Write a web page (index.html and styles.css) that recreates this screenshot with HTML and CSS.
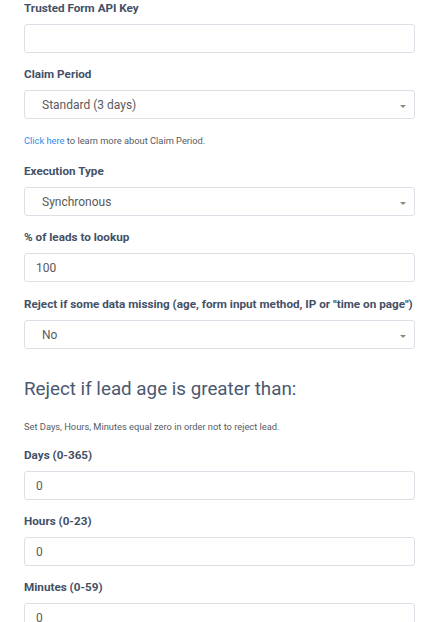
FILE: index.html
```html
<!DOCTYPE html>
<html>
<head>
<meta charset="utf-8">
<link rel="stylesheet" href="styles.css">
</head>
<body>
<div class="form">
  <div class="group">
    <label class="label">Trusted Form API Key</label>
    <div class="input"></div>
  </div>
  <div class="group">
    <label class="label">Claim Period</label>
    <div class="select"><span>Standard (3 days)</span><i class="caret"></i></div>
  </div>
  <p class="help"><a class="link">Click here</a> to learn more about Claim Period.</p>
  <div class="group">
    <label class="label">Execution Type</label>
    <div class="select"><span>Synchronous</span><i class="caret"></i></div>
  </div>
  <div class="group group-tall">
    <label class="label">% of leads to lookup</label>
    <div class="input">100</div>
  </div>
  <div class="group">
    <label class="label">Reject if some data missing (age, form input method, IP or "time on page")</label>
    <div class="select"><span>No</span><i class="caret"></i></div>
  </div>
  <h2 class="heading">Reject if lead age is greater than:</h2>
  <p class="note">Set Days, Hours, Minutes equal zero in order not to reject lead.</p>
  <div class="group">
    <label class="label">Days (0-365)</label>
    <div class="input">0</div>
  </div>
  <div class="group">
    <label class="label">Hours (0-23)</label>
    <div class="input">0</div>
  </div>
  <div class="group">
    <label class="label">Minutes (0-59)</label>
    <div class="input">0</div>
  </div>
</div>
</body>
</html>
```
FILE: styles.css
```css
html, body {
  margin: 0;
  padding: 0;
  background: #ffffff;
}
body {
  font-family: Roboto, "Liberation Sans", sans-serif;
  overflow: hidden;
}
.form {
  padding: 0 21px 0 24px;
  display: flex;
  flex-direction: column;
}
.group {
  display: flex;
  flex-direction: column;
  margin-bottom: 13px;
}
.group-tall {
  margin-bottom: 14px;
}
.label {
  display: block;
  font-size: 11.7px;
  line-height: 16px;
  font-weight: 700;
  color: #435066;
  margin-bottom: 8px;
  white-space: nowrap;
}
.input, .select {
  box-sizing: border-box;
  height: 29px;
  border: 1px solid #dcdfe6;
  border-radius: 3px;
  font-size: 12px;
  color: #5a5a5a;
  display: flex;
  align-items: center;
}
.input {
  padding-left: 11px;
}
.select {
  padding-left: 17px;
  justify-content: space-between;
  padding-right: 8px;
}
.caret {
  width: 0;
  height: 0;
  border-left: 3px solid transparent;
  border-right: 3px solid transparent;
  border-top: 3px solid #888888;
  margin-top: 4px;
}
.help {
  margin: 3px 0 16px;
  font-size: 9.3px;
  line-height: 12px;
  color: #555b66;
}
.link {
  color: #2f8fe8;
}
.heading {
  margin: 15px 0 20px;
  font-size: 18.8px;
  line-height: 24px;
  font-weight: 400;
  color: #4b5870;
}
.note {
  margin: 0 0 14px;
  font-size: 9.3px;
  line-height: 12px;
  color: #555b66;
}
```
